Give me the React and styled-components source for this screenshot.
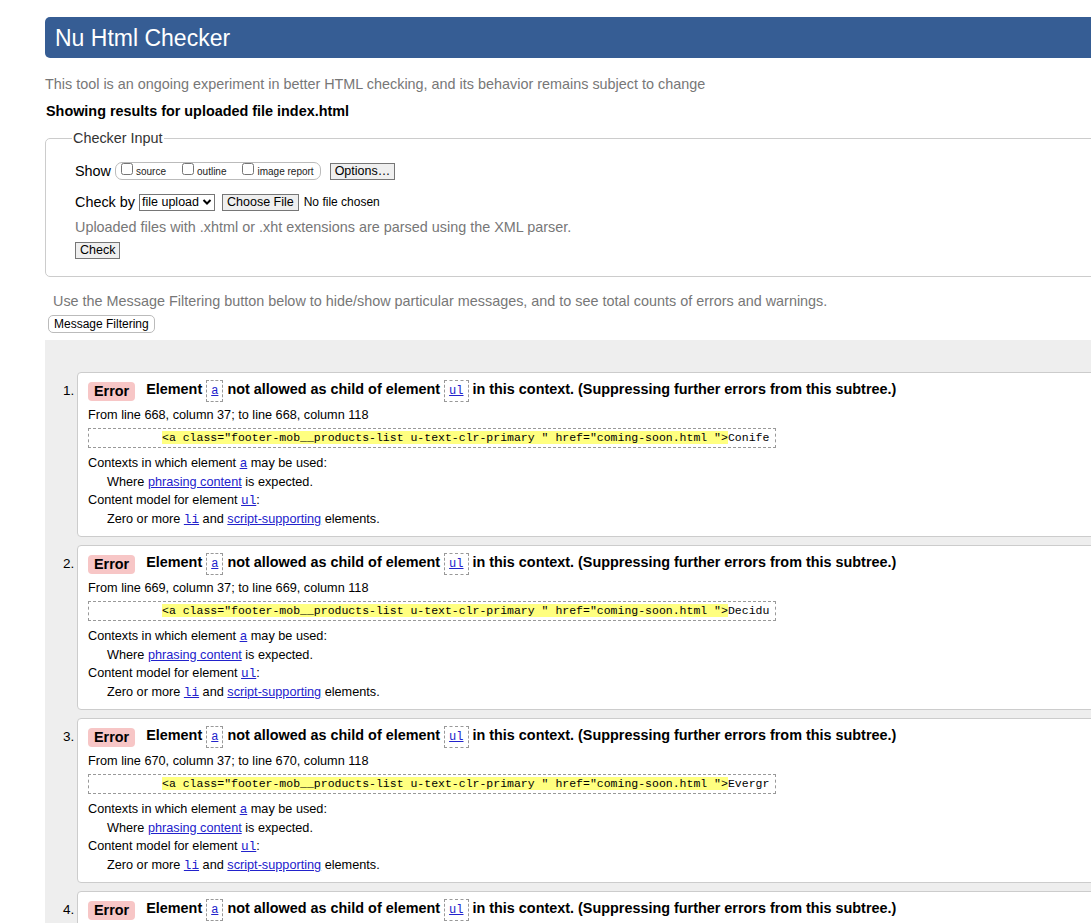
import styled, { createGlobalStyle } from "styled-components";

const GlobalStyle = createGlobalStyle`
  html, body {
    margin: 0;
    padding: 0;
    overflow: hidden;
    background: #fff;
  }
  body {
    font-family: "Liberation Sans", Arial, sans-serif;
    font-size: 14.4px;
    color: #000;
  }
`;

const messages = [
  { line: 668, tail: "Conife" },
  { line: 669, tail: "Decidu" },
  { line: 670, tail: "Evergr" },
  { line: 671, tail: "Shrubs" },
];

function Message({ index, line, tail }) {
  return (
    <Item>
      <Num>{index}.</Num>
      <Card>
        <Title>
          <Badge>Error</Badge>
          <TitleText>
            Element <InlineCode href="#">a</InlineCode> not allowed as child of
            element <InlineCode href="#">ul</InlineCode> in this context.
            (Suppressing further errors from this subtree.)
          </TitleText>
        </Title>
        <Line $mt={4}>
          From line {line}, column 37; to line {line}, column 118
        </Line>
        <Extract>
          {"          "}
          <Mark>
            {'<a class="footer-mob__products-list u-text-clr-primary " href="coming-soon.html ">'}
          </Mark>
          {tail}
        </Extract>
        <Line $mt={6}>
          Contexts in which element <Link $mono>a</Link> may be used:
        </Line>
        <Line $indent>
          Where <Link>phrasing content</Link> is expected.
        </Line>
        <Line>
          Content model for element <Link $mono>ul</Link>:
        </Line>
        <Line $indent>
          Zero or more <Link $mono>li</Link> and{" "}
          <Link>script-supporting</Link> elements.
        </Line>
      </Card>
    </Item>
  );
}

export default function App() {
  return (
    <Page>
      <GlobalStyle />
      <Header>
        <h1>Nu Html Checker</h1>
      </Header>
      <Intro>
        This tool is an ongoing experiment in better HTML checking, and its
        behavior remains subject to change
      </Intro>
      <Results>Showing results for uploaded file index.html</Results>
      <Fieldset>
        <Legend>Checker Input</Legend>
        <Row>
          <span>Show</span>
          <Pill>
            <Opt>
              <Box type="checkbox" />
              source
            </Opt>
            <Opt>
              <Box type="checkbox" />
              outline
            </Opt>
            <Opt>
              <Box type="checkbox" />
              image report
            </Opt>
          </Pill>
          <Button $ml={9}>Options…</Button>
        </Row>
        <Row $mt={13}>
          <span>Check by</span>
          <Select>
            file upload
            <svg width="10" height="8" viewBox="0 0 10 8">
              <path d="M1.5 2l3.5 3.5L8.5 2" fill="none" stroke="#000" strokeWidth="2" />
            </svg>
          </Select>
          <Button $ml={7}>Choose File</Button>
          <FileName>No file chosen</FileName>
        </Row>
        <Hint>Uploaded files with .xhtml or .xht extensions are parsed using the XML parser.</Hint>
        <Button $block>Check</Button>
      </Fieldset>
      <FilterNote>
        Use the Message Filtering button below to hide/show particular messages,
        and to see total counts of errors and warnings.
      </FilterNote>
      <FilterButton>Message Filtering</FilterButton>
      <List>
        {messages.map((m, i) => (
          <Message key={i} index={i + 1} line={m.line} tail={m.tail} />
        ))}
      </List>
    </Page>
  );
}

const Page = styled.div`
  padding-left: 45px;
  margin-right: -30px;
  padding-top: 17px;
`;

const Header = styled.header`
  background: #365d94;
  border-radius: 5px 0 0 5px;
  height: 41px;
  display: flex;
  align-items: center;
  padding-left: 10px;

  h1 {
    margin: 0 0 -2px;
    font-weight: normal;
    font-size: 23px;
    color: #fff;
  }
`;

const Intro = styled.p`
  margin: 18px 0 0;
  color: #777;
  line-height: 17px;
`;

const Results = styled.p`
  margin: 10px 0 0 1px;
  font-weight: bold;
  line-height: 17px;
`;

const Fieldset = styled.fieldset`
  margin: 10px 0 0;
  border: 1px solid #ccc;
  border-radius: 5px;
  padding: 16px 29px 17px;
`;

const Legend = styled.legend`
  padding: 0 1px;
  margin-left: -3px;
  color: #333;
`;

const Row = styled.div`
  display: flex;
  align-items: center;
  margin-top: ${(p) => p.$mt || 0}px;
  height: 18px;
`;

const Pill = styled.span`
  display: inline-flex;
  align-items: center;
  border: 1px solid #bbb;
  border-radius: 7px;
  height: 16px;
  padding: 0 6px 0 5px;
  margin-left: 4px;
  gap: 16px;
`;

const Opt = styled.label`
  display: inline-flex;
  align-items: center;
  font-size: 10px;
  gap: 3px;
  color: #222;
`;

const Box = styled.input`
  margin: 0;
  width: 12px;
  height: 12px;
  position: relative;
  top: -2px;
`;

const Button = styled.button`
  display: ${(p) => (p.$block ? "block" : "inline-block")};
  font-family: "Liberation Sans", Arial, sans-serif;
  font-size: 12.5px;
  background: #efefef;
  border: 1px solid #767676;
  border-radius: 0;
  height: 17px;
  padding: 0 4px;
  color: #000;
  margin-left: ${(p) => p.$ml || 0}px;
  margin-top: ${(p) => (p.$block ? 6 : 0)}px;
  line-height: 15px;
`;

const FileName = styled.span`
  font-size: 12px;
  margin-left: 5px;
`;

const Select = styled.span`
  display: inline-flex;
  align-items: center;
  gap: 3px;
  margin-left: 4px;
  border: 1px solid #767676;
  height: 15px;
  padding: 0 2px;
  font-size: 12.5px;
`;

const Hint = styled.p`
  margin: 8px 0 0;
  color: #777;
  line-height: 17px;
`;

const FilterNote = styled.p`
  margin: 16px 0 0 8px;
  color: #777;
  line-height: 17px;
`;

const FilterButton = styled.button`
  display: block;
  margin: 5px 0 0 3px;
  font-family: "Liberation Sans", Arial, sans-serif;
  font-size: 12px;
  background: #fff;
  border: 1px solid #bbb;
  border-radius: 5px;
  height: 18px;
  padding: 0 5px;
  color: #000;
`;

const List = styled.ol`
  list-style: none;
  margin: 7px 0 0;
  padding: 32px 0 0 32px;
  background: #eee;
  display: flex;
  flex-direction: column;
  gap: 8px;
`;

const Item = styled.li`
  display: flex;
  position: relative;
`;

const Num = styled.span`
  position: absolute;
  left: -14px;
  top: 11px;
  font-size: 13.5px;
`;

const Card = styled.div`
  flex: 1;
  background: #fff;
  border: 1px solid #ccc;
  border-radius: 4px 0 0 4px;
  padding: 7px 10px 7px;
  font-size: 12.7px;
`;

const Title = styled.div`
  display: flex;
  align-items: center;
  gap: 11px;
  font-weight: bold;
  font-size: 14.4px;
  height: 22px;
`;

const Badge = styled.span`
  background: #f7c6c6;
  border-radius: 4px;
  padding: 0 6px;
  height: 19px;
  line-height: 19px;
  font-weight: bold;
`;

const TitleText = styled.span`
  white-space: nowrap;
`;

const InlineCode = styled.a`
  display: inline-block;
  border: 1px dashed #999;
  padding: 2px 4px;
  font-family: "Liberation Mono", monospace;
  font-weight: normal;
  font-size: 12px;
  color: #22c;
  line-height: 16px;
`;

const Line = styled.div`
  margin-top: ${(p) => p.$mt || 0}px;
  padding-left: ${(p) => (p.$indent ? 19 : 0)}px;
  line-height: 18px;
  white-space: nowrap;
`;

const Extract = styled.div`
  margin-top: 4px;
  border: 1px dashed #999;
  width: 688px;
  line-height: 18px;
  white-space: pre;
  font-family: "Liberation Mono", monospace;
  font-size: 11.5px;
  padding-left: 4px;
  box-sizing: border-box;
  height: 20px;
`;

const Mark = styled.span`
  background: #ffff80;
`;

const Link = styled.a.attrs({ href: "#" })`
  color: #22c;
  text-decoration: underline;
  font-family: ${(p) =>
    p.$mono ? '"Liberation Mono", monospace' : "inherit"};
`;
